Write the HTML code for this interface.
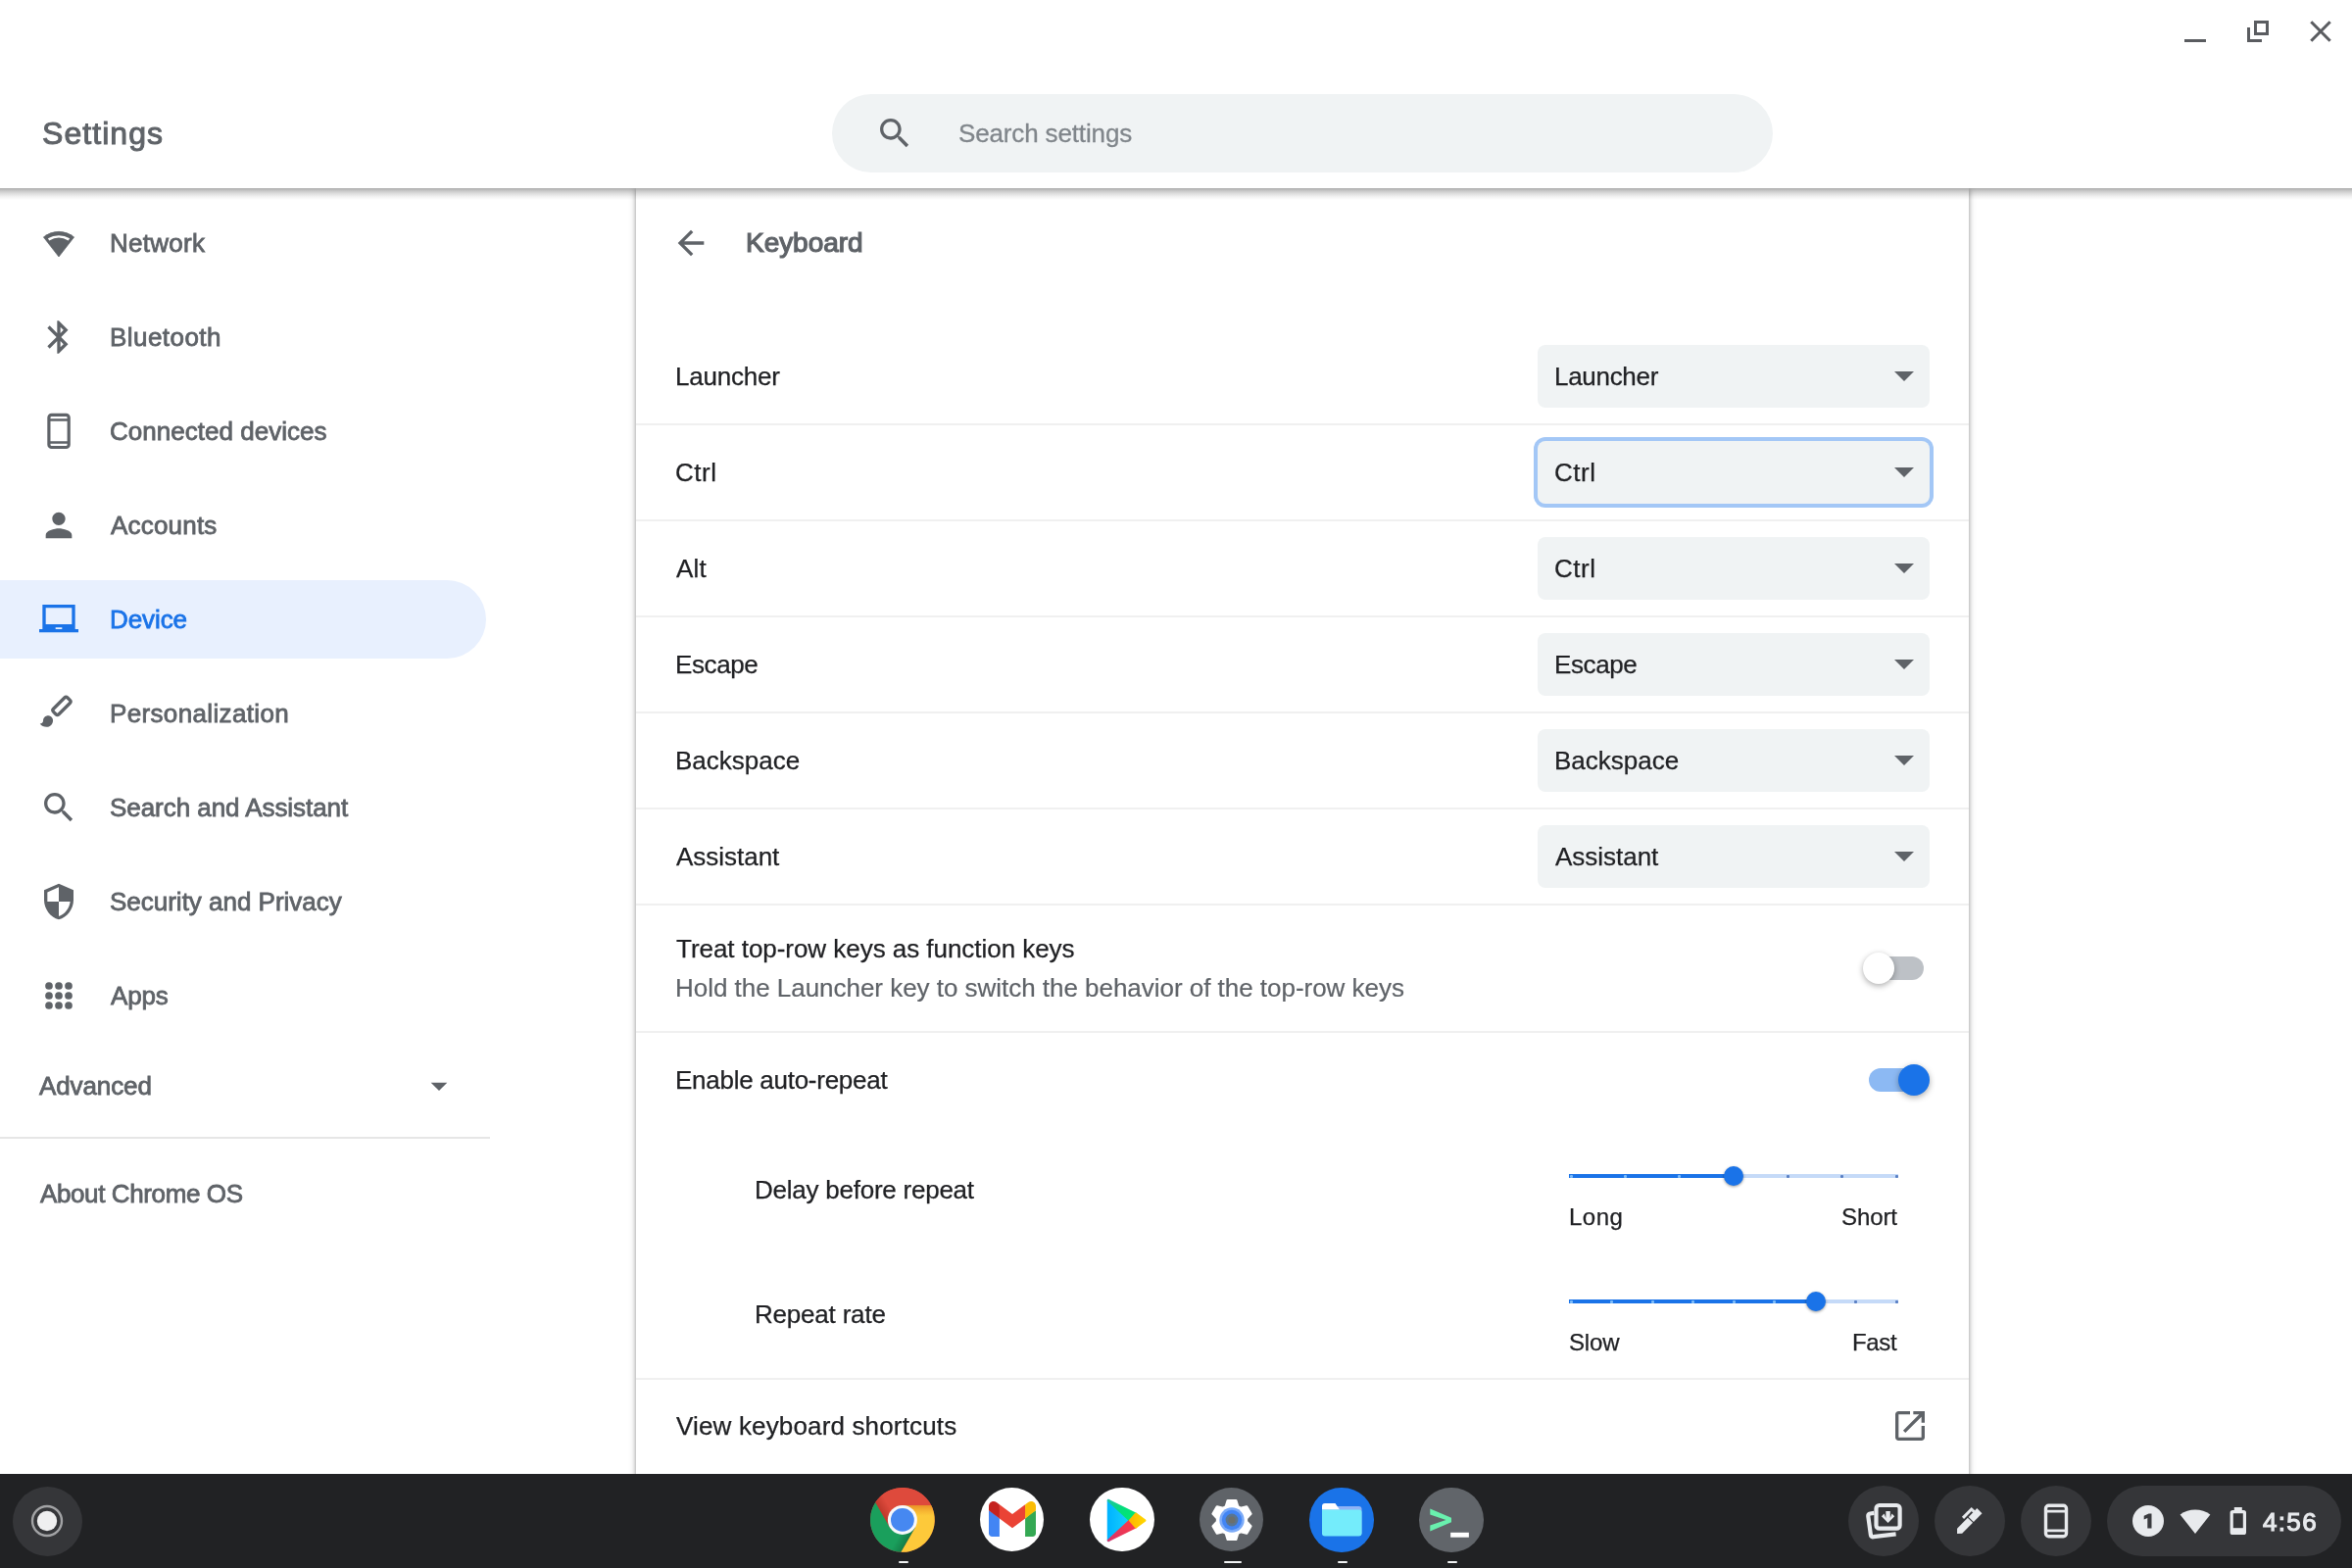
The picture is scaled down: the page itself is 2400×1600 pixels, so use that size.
<!DOCTYPE html>
<html><head><meta charset="utf-8"><title>Settings</title><style>
html,body{margin:0;padding:0}
body{width:2400px;height:1600px;overflow:hidden;background:#fff;position:relative;font-family:"Liberation Sans",sans-serif;}
.t{position:absolute;white-space:pre;line-height:60px;height:60px;will-change:transform;}
.i{position:absolute;display:block;overflow:visible}
.a{position:absolute}
.sep{position:absolute;left:649px;width:1360px;height:2px;background:#f0f0f0}
.sel{position:absolute;left:1569px;width:400px;height:64px;border-radius:8px;background:#f0f3f4}
</style></head>
<body>
<div class="a" style="left:649px;top:192px;width:1360px;height:1330px;background:#fff;box-shadow:0 2px 4px rgba(0,0,0,.28),0 2px 6px 2px rgba(0,0,0,.14)"></div>
<svg class="i" style="left:685px;top:228px" width="40" height="40" viewBox="0 0 24 24" fill="#5f6368" ><path d="M20 11H7.83l5.59-5.59L12 4l-8 8 8 8 1.41-1.41L7.83 13H20v-2z"/></svg>
<div class="sep" style="top:432px"></div>
<div class="sep" style="top:530px"></div>
<div class="sep" style="top:628px"></div>
<div class="sep" style="top:726px"></div>
<div class="sep" style="top:824px"></div>
<div class="sep" style="top:922px"></div>
<div class="sep" style="top:1052px"></div>
<div class="sep" style="top:1406px"></div>
<div class="sel" style="top:352px"></div>
<svg class="i" style="left:1933px;top:379px" width="20" height="10" viewBox="0 0 20 10"><path d="M0 0H20L10 10z" fill="#5f6368"/></svg>
<div class="sel" style="top:450px;box-shadow:0 0 0 4px #a3c7f6"></div>
<svg class="i" style="left:1933px;top:477px" width="20" height="10" viewBox="0 0 20 10"><path d="M0 0H20L10 10z" fill="#5f6368"/></svg>
<div class="sel" style="top:548px"></div>
<svg class="i" style="left:1933px;top:575px" width="20" height="10" viewBox="0 0 20 10"><path d="M0 0H20L10 10z" fill="#5f6368"/></svg>
<div class="sel" style="top:646px"></div>
<svg class="i" style="left:1933px;top:673px" width="20" height="10" viewBox="0 0 20 10"><path d="M0 0H20L10 10z" fill="#5f6368"/></svg>
<div class="sel" style="top:744px"></div>
<svg class="i" style="left:1933px;top:771px" width="20" height="10" viewBox="0 0 20 10"><path d="M0 0H20L10 10z" fill="#5f6368"/></svg>
<div class="sel" style="top:842px"></div>
<svg class="i" style="left:1933px;top:869px" width="20" height="10" viewBox="0 0 20 10"><path d="M0 0H20L10 10z" fill="#5f6368"/></svg>
<div class="a" style="left:1907px;top:976px;width:56px;height:24px;border-radius:12px;background:#bdc1c6"></div>
<div class="a" style="left:1901px;top:972px;width:32px;height:32px;border-radius:50%;background:#fff;box-shadow:0 2px 6px rgba(0,0,0,.33)"></div>
<div class="a" style="left:1907px;top:1090px;width:56px;height:24px;border-radius:12px;background:#8cb9f3"></div>
<div class="a" style="left:1937px;top:1086px;width:32px;height:32px;border-radius:50%;background:#1a73e8;box-shadow:0 2px 6px rgba(0,0,0,.33)"></div>
<div class="a" style="left:1601px;top:1198px;width:336px;height:4px;background:#c5daf8"></div>
<div class="a" style="left:1601px;top:1198px;width:168.0px;height:4px;background:#1a73e8"></div>
<div class="a" style="left:1601.5px;top:1198.5px;width:3px;height:3px;border-radius:1px;background:#7dbcfa"></div>
<div class="a" style="left:1656.8px;top:1198.5px;width:3px;height:3px;border-radius:1px;background:#7dbcfa"></div>
<div class="a" style="left:1712.2px;top:1198.5px;width:3px;height:3px;border-radius:1px;background:#7dbcfa"></div>
<div class="a" style="left:1822.8px;top:1198.5px;width:3px;height:3px;border-radius:1px;background:#5a80c4"></div>
<div class="a" style="left:1878.2px;top:1198.5px;width:3px;height:3px;border-radius:1px;background:#5a80c4"></div>
<div class="a" style="left:1933.5px;top:1198.5px;width:3px;height:3px;border-radius:1px;background:#5a80c4"></div>
<div class="a" style="left:1759.0px;top:1190px;width:20px;height:20px;border-radius:50%;background:#1a73e8;box-shadow:0 1px 3px rgba(0,0,0,.4)"></div>
<div class="a" style="left:1601px;top:1326px;width:336px;height:4px;background:#c5daf8"></div>
<div class="a" style="left:1601px;top:1326px;width:252.0px;height:4px;background:#1a73e8"></div>
<div class="a" style="left:1601.5px;top:1326.5px;width:3px;height:3px;border-radius:1px;background:#7dbcfa"></div>
<div class="a" style="left:1643.0px;top:1326.5px;width:3px;height:3px;border-radius:1px;background:#7dbcfa"></div>
<div class="a" style="left:1684.5px;top:1326.5px;width:3px;height:3px;border-radius:1px;background:#7dbcfa"></div>
<div class="a" style="left:1726.0px;top:1326.5px;width:3px;height:3px;border-radius:1px;background:#7dbcfa"></div>
<div class="a" style="left:1767.5px;top:1326.5px;width:3px;height:3px;border-radius:1px;background:#7dbcfa"></div>
<div class="a" style="left:1809.0px;top:1326.5px;width:3px;height:3px;border-radius:1px;background:#7dbcfa"></div>
<div class="a" style="left:1892.0px;top:1326.5px;width:3px;height:3px;border-radius:1px;background:#5a80c4"></div>
<div class="a" style="left:1933.5px;top:1326.5px;width:3px;height:3px;border-radius:1px;background:#5a80c4"></div>
<div class="a" style="left:1843.0px;top:1318px;width:20px;height:20px;border-radius:50%;background:#1a73e8;box-shadow:0 1px 3px rgba(0,0,0,.4)"></div>
<svg class="i" style="left:1929px;top:1435px" width="40" height="40" viewBox="0 0 24 24" fill="#5f6368" ><path d="M19 19H5V5h7V3H5c-1.11 0-2 .9-2 2v14c0 1.1.89 2 2 2h14c1.1 0 2-.9 2-2v-7h-2v7zM14 3v2h3.59l-9.83 9.83 1.41 1.41L19 6.41V10h2V3h-7z"/></svg>
<div class="a" style="left:0;top:592px;width:496px;height:80px;border-radius:0 40px 40px 0;background:#e8f0fe"></div>
<svg class="i" style="left:40px;top:228px" width="40" height="40" viewBox="0 0 40 40"><path d="M20 34 L4.4 13.9 A24.7 24.7 0 0 1 35.6 13.9 Z" fill="#5f6368" stroke="#5f6368" stroke-width="0.7" stroke-linejoin="round"/><path d="M9.6 16.4 A20 20 0 0 1 30.4 16.4" stroke="#fff" stroke-width="2.7" fill="none"/></svg>
<svg class="i" style="left:40px;top:324px" width="40" height="40" viewBox="0 0 24 24" fill="#5f6368" ><path d="M17.71 7.71L12 2h-1v7.59L6.41 5 5 6.41 10.59 12 5 17.59 6.41 19 11 14.41V22h1l5.71-5.71-4.3-4.29 4.3-4.29zM13 5.83l1.88 1.88L13 9.59V5.83zm1.88 10.46L13 18.17v-3.76l1.88 1.88z"/></svg>
<svg class="i" style="left:40px;top:420px" width="40" height="40" viewBox="0 0 40 40" fill="none" stroke="#5f6368"><rect x="9.9" y="3.3" width="20.3" height="33.2" rx="2.8" stroke-width="3.2"/><path d="M10 8.5H30 M10 31.5H30" stroke-width="2.3"/></svg>
<svg class="i" style="left:40px;top:516px" width="40" height="40" viewBox="0 0 24 24" fill="#5f6368" ><path d="M12 12c2.21 0 4-1.79 4-4s-1.79-4-4-4-4 1.79-4 4 1.79 4 4 4zm0 2c-2.67 0-8 1.34-8 4v2h16v-2c0-2.66-5.33-4-8-4z"/></svg>
<svg class="i" style="left:40px;top:612px" width="40" height="40" viewBox="0 0 24 24" fill="#1a73e8" ><path d="M22 18V3H2v15H0v2h24v-2h-2zm-8 0h-4v-1h4v1zm6-3H4V5h16v10z"/></svg>
<svg class="i" style="left:40px;top:708px" width="40" height="40" viewBox="0 0 40 40"><g transform="translate(22.95 12.4) rotate(-45)"><rect x="-10.15" y="-3.9" width="20.3" height="7.8" rx="2.2" fill="none" stroke="#5f6368" stroke-width="3.3"/></g><path transform="translate(-2.6 -1.2) scale(1.6667)" d="M7 14c-1.66 0-3 1.34-3 3 0 1.31-1.16 2-2 2 .92 1.22 2.49 2 4 2 2.21 0 4-1.79 4-4 0-1.66-1.34-3-3-3z" fill="#5f6368"/></svg>
<svg class="i" style="left:40px;top:804px" width="40" height="40" viewBox="0 0 24 24" fill="#5f6368" ><path d="M15.5 14h-.79l-.28-.27C15.41 12.59 16 11.11 16 9.5 16 5.91 13.09 3 9.5 3S3 5.91 3 9.5 5.91 16 9.5 16c1.61 0 3.09-.59 4.23-1.57l.27.28v.79l5 4.99L20.49 19l-4.99-5zm-6 0C7.01 14 5 11.99 5 9.5S7.01 5 9.5 5 14 7.01 14 9.5 11.99 14 9.5 14z"/></svg>
<svg class="i" style="left:40px;top:900px" width="40" height="40" viewBox="0 0 24 24" fill="#5f6368" ><path d="M12 1L3 5v6c0 5.55 3.84 10.74 9 12 5.16-1.26 9-6.45 9-12V5l-9-4zm0 10.99h7c-.53 4.12-3.28 7.79-7 8.94V12H5V6.3l7-3.11v8.8z"/></svg>
<svg class="i" style="left:40px;top:996px" width="40" height="40" viewBox="0 0 40 40" fill="#5f6368"><circle cx="10" cy="10" r="3.85"/><circle cx="10" cy="20" r="3.85"/><circle cx="10" cy="30" r="3.85"/><circle cx="20" cy="10" r="3.85"/><circle cx="20" cy="20" r="3.85"/><circle cx="20" cy="30" r="3.85"/><circle cx="30" cy="10" r="3.85"/><circle cx="30" cy="20" r="3.85"/><circle cx="30" cy="30" r="3.85"/></svg>
<svg class="i" style="left:428px;top:1088px" width="40" height="40" viewBox="0 0 24 24" fill="#5f6368" ><path d="M7 10l5 5 5-5z"/></svg>
<div class="a" style="left:0;top:1160px;width:500px;height:2px;background:#e6e6e6"></div>
<div class="a" style="left:0;top:0;width:2400px;height:192px;background:#fff"></div>
<div class="a" style="left:0;top:192px;width:2400px;height:12px;background:linear-gradient(to bottom,rgba(0,0,0,.32),rgba(0,0,0,.17) 35%,rgba(0,0,0,.06) 70%,rgba(0,0,0,0))"></div>
<div class="a" style="left:849px;top:96px;width:960px;height:80px;border-radius:40px;background:#f0f3f4"></div>
<svg class="i" style="left:893px;top:116px" width="40" height="40" viewBox="0 0 24 24" fill="#5f6368" ><path d="M15.5 14h-.79l-.28-.27C15.41 12.59 16 11.11 16 9.5 16 5.91 13.09 3 9.5 3S3 5.91 3 9.5 5.91 16 9.5 16c1.61 0 3.09-.59 4.23-1.57l.27.28v.79l5 4.99L20.49 19l-4.99-5zm-6 0C7.01 14 5 11.99 5 9.5S7.01 5 9.5 5 14 7.01 14 9.5 11.99 14 9.5 14z"/></svg>
<div class="a" style="left:2229px;top:40px;width:22px;height:3px;background:#5a5c60"></div>
<div class="a" style="left:2300px;top:21px;width:9px;height:9px;border:3px solid #5a5c60"></div>
<div class="a" style="left:2293px;top:28px;width:12px;height:12px;border-left:3px solid #5a5c60;border-bottom:3px solid #5a5c60"></div>
<svg class="i" style="left:2354px;top:18px" width="28" height="28" viewBox="0 0 28 28"><path d="M4.3 4.3 L23.7 23.7 M23.7 4.3 L4.3 23.7" stroke="#5a5c60" stroke-width="3" fill="none"/></svg>
<div class="a" style="left:0;top:1504px;width:2400px;height:96px;background:#212224"></div>
<div class="a" style="left:12.5px;top:1516.5px;width:71px;height:71px;border-radius:50%;background:#353639"></div>
<svg class="i" style="left:28px;top:1532px" width="40" height="40" viewBox="-20 -20 40 40"><circle r="15" fill="none" stroke="#a2a3a5" stroke-width="2.4"/><circle r="10.2" fill="#efeff0"/></svg>
<svg class="i" style="left:888.1px;top:1518.1px" width="65.8" height="65.8" viewBox="-32.9 -32.9 65.8 65.8"><defs><linearGradient id="cgy" x1="0" y1="0" x2="0" y2="1"><stop offset="0" stop-color="#d9601a" stop-opacity=".55"/><stop offset="1" stop-color="#e8881a" stop-opacity="0"/></linearGradient><linearGradient id="cgr" x1="0" y1="0" x2="0" y2="1"><stop offset="0" stop-color="#8c1d12" stop-opacity=".4"/><stop offset="1" stop-color="#8c1d12" stop-opacity="0"/></linearGradient><linearGradient id="cgg" x1="0" y1="0" x2="0" y2="1"><stop offset="0" stop-color="#0a4d2a" stop-opacity=".4"/><stop offset="1" stop-color="#0a4d2a" stop-opacity="0"/></linearGradient><clipPath id="ccp"><circle r="32.9"/></clipPath></defs><circle r="32.9" fill="#de4a3c"/><path d="M0.00 -15.00 L29.28 -15.00 A32.9 32.9 0 0 0 -27.63 -17.86 L-12.99 7.50 Z" fill="#de4a3c"/><path d="M12.99 7.50 L-1.65 32.86 A32.9 32.9 0 0 0 29.28 -15.00 L0.00 -15.00 Z" fill="#fdc93a"/><path d="M-12.99 7.50 L-27.63 -17.86 A32.9 32.9 0 0 0 -1.65 32.86 L12.99 7.50 Z" fill="#1a9f5c"/><g clip-path="url(#ccp)"><rect x="0" y="-15.0" width="32.9" height="11" fill="url(#cgy)"/><g transform="rotate(120)"><rect x="0" y="-15.0" width="32.9" height="10" fill="url(#cgg)"/></g><g transform="rotate(240)"><rect x="0" y="-15.0" width="32.9" height="10" fill="url(#cgr)"/></g></g><circle r="15.0" fill="#f8f9fa"/><circle r="11.9" fill="#4688f1"/></svg>
<div class="a" style="left:999.95px;top:1517.95px;width:65.5px;height:65.5px;border-radius:50%;background:#fff"></div><svg class="i" style="left:1008.7px;top:1532.4px" width="48" height="36.2" viewBox="0 0 256 193"><path d="M58.182 192.05V93.14L27.507 65.077 0 49.504v125.091c0 9.658 7.825 17.455 17.455 17.455h40.727z" fill="#4285F4"/><path d="M197.818 192.05h40.727c9.659 0 17.455-7.826 17.455-17.455V49.505l-31.156 17.837-27.026 25.798v98.91z" fill="#34A853"/><path d="M58.182 93.14l-4.174-38.647 4.174-36.989L128 69.868l69.818-52.364 4.669 34.992-4.669 40.644L128 145.504z" fill="#EA4335"/><path d="M197.818 17.504V93.14L256 49.504V26.231c0-21.585-24.64-33.89-41.89-20.945l-16.292 12.218z" fill="#FBBC04"/><path d="M0 49.504l26.759 20.07L58.182 93.14V17.504L41.89 5.286C24.61-7.66 0 4.646 0 26.23v23.273z" fill="#C5221F"/></svg>
<div class="a" style="left:1112.15px;top:1517.95px;width:65.5px;height:65.5px;border-radius:50%;background:#fff"></div><svg class="i" style="left:1127.9px;top:1527.7px" width="44" height="46" viewBox="0 0 44 46"><defs><linearGradient id="pb" x1="0" y1="0" x2="1" y2="0"><stop offset="0" stop-color="#00b4ff"/><stop offset="1" stop-color="#19d2fb"/></linearGradient><linearGradient id="pg" x1="0" y1="0" x2="1" y2="1"><stop offset="0" stop-color="#1ec4a0"/><stop offset=".45" stop-color="#04dd7c"/><stop offset="1" stop-color="#00ea72"/></linearGradient><linearGradient id="pr" x1="1" y1="0" x2="0" y2="1"><stop offset="0" stop-color="#ff3a44"/><stop offset="1" stop-color="#d93468"/></linearGradient><linearGradient id="py" x1="1" y1="0" x2="0" y2="0"><stop offset="0" stop-color="#ffd600"/><stop offset="1" stop-color="#ffb700"/></linearGradient></defs><g stroke-linejoin="round" stroke-width="2.5"><path d="M3 3 L25.2 23.5 L3 44 Z" fill="url(#pb)" stroke="url(#pb)"/><path d="M3 3 L31 16.8 L25.2 23.5 Z" fill="url(#pg)" stroke="url(#pg)"/><path d="M3 44 L31 30.2 L25.2 23.5 Z" fill="url(#pr)" stroke="url(#pr)"/><path d="M31 16.8 L40.2 23.5 L31 30.2 L25.2 23.5 Z" fill="url(#py)" stroke="url(#py)"/></g></svg>
<div class="a" style="left:1223.85px;top:1517.95px;width:65.5px;height:65.5px;border-radius:50%;background:#5f6368"></div><svg class="i" style="left:1232.6px;top:1526.7px" width="48" height="48" viewBox="-24 -24 48 48"><polygon points="-4.22,-19.86 4.22,-19.86 6.10,-13.70 8.82,-12.14 15.09,-13.58 19.31,-6.27 14.92,-1.57 14.92,1.57 19.31,6.27 15.09,13.58 8.82,12.14 6.10,13.70 4.22,19.86 -4.22,19.86 -6.10,13.70 -8.82,12.14 -15.09,13.58 -19.31,6.27 -14.92,1.57 -14.92,-1.57 -19.31,-6.27 -15.09,-13.58 -8.82,-12.14 -6.10,-13.70" fill="#fff" stroke="#fff" stroke-width="2.5" stroke-linejoin="round"/><circle r="12.7" fill="#7baaf7"/><circle r="10.2" fill="#4285f4"/><circle r="6.4" fill="#5a7590"/><circle r="3.6" fill="#6b6f6c"/></svg>
<div class="a" style="left:1336.05px;top:1518.05px;width:65.5px;height:65.5px;border-radius:50%;background:#1a73e8"></div><svg class="i" style="left:1348.6px;top:1533.7px" width="41" height="34" viewBox="0 0 41 34"><rect x="0" y="3" width="40.5" height="30" rx="3" fill="#8fb3f6"/><path d="M0 3 A3 3 0 0 1 3 0 H13.5 L18 6.5 H0Z" fill="#fff"/><path d="M0 6.5 H38 A2.5 2.5 0 0 1 40.5 9 V30.5 A3 3 0 0 1 37.5 33.5 H3 A3 3 0 0 1 0 30.5 Z" fill="#74ecfb"/><path d="M0 6.5 H18 L13.5 0" fill="none"/></svg>
<div class="a" style="left:1448.25px;top:1518.15px;width:65.5px;height:65.5px;border-radius:50%;background:#61656a"></div><svg class="i" style="left:1451.0px;top:1520.9px" width="60" height="60" viewBox="-30 -30 60 60"><path d="M-21.7 -11.6 L0 -2.3 V2.3 L-21.7 11.6 V5.4 L-5.5 0 L-21.7 -5.4 Z" fill="#69f0ae"/><rect x="-0.85" y="12.8" width="18.7" height="4.9" fill="#fff"/></svg>
<div class="a" style="left:916.5px;top:1592.5px;width:10px;height:2.5px;border-radius:1px;background:#f1f3f4"></div>
<div class="a" style="left:1249.0px;top:1592.5px;width:18px;height:2.5px;border-radius:1px;background:#f1f3f4"></div>
<div class="a" style="left:1365.0px;top:1592.5px;width:10px;height:2.5px;border-radius:1px;background:#f1f3f4"></div>
<div class="a" style="left:1476.5px;top:1592.5px;width:10px;height:2.5px;border-radius:1px;background:#f1f3f4"></div>
<div class="a" style="left:1886px;top:1516px;width:72px;height:72px;border-radius:50%;background:#353639"></div>
<div class="a" style="left:1974px;top:1516px;width:72px;height:72px;border-radius:50%;background:#353639"></div>
<div class="a" style="left:2062px;top:1516px;width:72px;height:72px;border-radius:50%;background:#353639"></div>
<div class="a" style="left:2150px;top:1516px;width:239px;height:72px;border-radius:36px;background:#353639"></div>
<svg class="i" style="left:1902px;top:1532px" width="40" height="40" viewBox="0 0 40 40" fill="none" stroke="#e8eaed" stroke-width="4.2" stroke-linejoin="round" stroke-linecap="butt"><rect x="12.5" y="4" width="24.1" height="23.7" rx="3.2"/><path d="M10.4 11.9 L6.4 12.5 Q4 12.9 4.3 15.3 L6.9 34.2 Q7.3 36.6 9.7 36.2 L32.6 33.3"/><path d="M22.35 10.1 H26.75 V17 L28.5 12.5 L31.2 15.2 L24.55 22 L17.9 15.2 L20.6 12.5 L22.35 17 Z" fill="#e8eaed" stroke="none"/><path d="M24.55 21 L20 16.4 M24.55 21 L29.1 16.4" stroke-width="0" /></svg>
<svg class="i" style="left:1990px;top:1532px" width="40" height="40" viewBox="0 0 40 40" fill="#e8eaed"><g transform="translate(7.1 32.9) rotate(-45.6)"><path d="M0 0 L3.6 -3.6 H19.1 V3.6 H3.6 Z"/><rect x="20.3" y="-3.6" width="12.3" height="7.2"/><rect x="15.6" y="-8.5" width="13.9" height="3"/><rect x="26.6" y="-5.7" width="2.9" height="2.4"/></g></svg>
<svg class="i" style="left:2078px;top:1532px" width="40" height="40" viewBox="0 0 40 40" fill="none" stroke="#e8eaed"><rect x="9.5" y="4.2" width="21" height="31.6" rx="3" stroke-width="3.4"/><path d="M9.5 10.2H30.5 M9.5 29.8H30.5" stroke-width="2.8"/></svg>
<div class="a" style="left:2176px;top:1536px;width:32px;height:32px;border-radius:50%;background:#e8eaed"></div>
<svg class="i" style="left:2181.8px;top:1541.8px" width="20" height="20" viewBox="-10 -10 20 20"><path d="M3.5 -7.4 V7.6 H-0.7 V-2.9 L-4.3 -1.6 V-5.2 L0.6 -7.4 Z" fill="#3a3b3f"/></svg>
<svg class="i" style="left:2220px;top:1532px" width="40" height="40" viewBox="0 0 40 40"><path d="M20 33 L4.6 13.6 A26 26 0 0 1 35.4 13.6 Z" fill="#e8eaed"/></svg>
<svg class="i" style="left:2264px;top:1532px" width="40" height="40" viewBox="0 0 40 40"><rect x="13.2" y="10.6" width="13.2" height="21.8" rx="1" fill="none" stroke="#e8eaed" stroke-width="3.2"/><rect x="15.8" y="6" width="8" height="4" fill="#e8eaed"/><rect x="13.2" y="27.2" width="13.2" height="6.6" fill="#e8eaed"/></svg>
<div class="t" style="left:43.4px;top:105.6px;font-size:32px;letter-spacing:1.057px;color:#5f6368;-webkit-text-stroke:1.0px #5f6368;">Settings</div>
<div class="t" style="left:977.7px;top:105.6px;font-size:26px;letter-spacing:-0.143px;color:#80868b;-webkit-text-stroke:0.3px #80868b;">Search settings</div>
<div class="t" style="left:111.7px;top:218.0px;font-size:26px;letter-spacing:0.283px;color:#5f6368;-webkit-text-stroke:0.8px #5f6368;">Network</div>
<div class="t" style="left:111.7px;top:314.0px;font-size:26px;letter-spacing:0.45px;color:#5f6368;-webkit-text-stroke:0.8px #5f6368;">Bluetooth</div>
<div class="t" style="left:112.0px;top:410.0px;font-size:26px;letter-spacing:0.019px;color:#5f6368;-webkit-text-stroke:0.8px #5f6368;">Connected devices</div>
<div class="t" style="left:112.8px;top:506.0px;font-size:26px;letter-spacing:0.2px;color:#5f6368;-webkit-text-stroke:0.8px #5f6368;">Accounts</div>
<div class="t" style="left:111.7px;top:602.0px;font-size:26px;letter-spacing:-0.08px;color:#1a73e8;-webkit-text-stroke:0.8px #1a73e8;">Device</div>
<div class="t" style="left:111.7px;top:698.0px;font-size:26px;letter-spacing:0.35px;color:#5f6368;-webkit-text-stroke:0.8px #5f6368;">Personalization</div>
<div class="t" style="left:112.0px;top:794.0px;font-size:26px;letter-spacing:-0.053px;color:#5f6368;-webkit-text-stroke:0.8px #5f6368;">Search and Assistant</div>
<div class="t" style="left:112.0px;top:890.0px;font-size:26px;letter-spacing:-0.011px;color:#5f6368;-webkit-text-stroke:0.8px #5f6368;">Security and Privacy</div>
<div class="t" style="left:113.0px;top:986.0px;font-size:26px;letter-spacing:-0.2px;color:#5f6368;-webkit-text-stroke:0.8px #5f6368;">Apps</div>
<div class="t" style="left:40.3px;top:1077.7px;font-size:26px;letter-spacing:-0.1px;color:#5f6368;-webkit-text-stroke:0.8px #5f6368;">Advanced</div>
<div class="t" style="left:40.5px;top:1187.9px;font-size:26px;letter-spacing:-0.386px;color:#5f6368;-webkit-text-stroke:0.8px #5f6368;">About Chrome OS</div>
<div class="t" style="left:760.9px;top:217.5px;font-size:28px;letter-spacing:-0.043px;color:#5f6368;-webkit-text-stroke:1.2px #5f6368;">Keyboard</div>
<div class="t" style="left:688.9px;top:353.6px;font-size:26px;letter-spacing:-0.229px;color:#202124;-webkit-text-stroke:0.25px #202124;">Launcher</div>
<div class="t" style="left:689.3px;top:451.6px;font-size:26px;letter-spacing:0.5px;color:#202124;-webkit-text-stroke:0.25px #202124;">Ctrl</div>
<div class="t" style="left:690.0px;top:549.6px;font-size:26px;letter-spacing:0.2px;color:#202124;-webkit-text-stroke:0.25px #202124;">Alt</div>
<div class="t" style="left:689.1px;top:647.6px;font-size:26px;letter-spacing:-0.38px;color:#202124;-webkit-text-stroke:0.25px #202124;">Escape</div>
<div class="t" style="left:689.1px;top:745.6px;font-size:26px;letter-spacing:0.013px;color:#202124;-webkit-text-stroke:0.25px #202124;">Backspace</div>
<div class="t" style="left:690.0px;top:843.6px;font-size:26px;letter-spacing:-0.025px;color:#202124;-webkit-text-stroke:0.25px #202124;">Assistant</div>
<div class="t" style="left:690.3px;top:937.6px;font-size:26px;letter-spacing:-0.041px;color:#202124;-webkit-text-stroke:0.25px #202124;">Treat top-row keys as function keys</div>
<div class="t" style="left:689.3px;top:977.9px;font-size:26px;letter-spacing:-0.029px;color:#5f6368;-webkit-text-stroke:0.2px #5f6368;">Hold the Launcher key to switch the behavior of the top-row keys</div>
<div class="t" style="left:689.3px;top:1071.5px;font-size:26px;letter-spacing:-0.265px;color:#202124;-webkit-text-stroke:0.25px #202124;">Enable auto-repeat</div>
<div class="t" style="left:769.5px;top:1183.5px;font-size:26px;letter-spacing:-0.239px;color:#202124;-webkit-text-stroke:0.25px #202124;">Delay before repeat</div>
<div class="t" style="left:769.5px;top:1311.1px;font-size:26px;letter-spacing:-0.2px;color:#202124;-webkit-text-stroke:0.25px #202124;">Repeat rate</div>
<div class="t" style="left:690.3px;top:1424.7px;font-size:26px;letter-spacing:0.155px;color:#202124;-webkit-text-stroke:0.25px #202124;">View keyboard shortcuts</div>
<div class="t" style="left:1585.6px;top:353.6px;font-size:26px;letter-spacing:-0.3px;color:#202124;-webkit-text-stroke:0.25px #202124;">Launcher</div>
<div class="t" style="left:1586.0px;top:451.6px;font-size:26px;letter-spacing:0.5px;color:#202124;-webkit-text-stroke:0.25px #202124;">Ctrl</div>
<div class="t" style="left:1586.0px;top:549.6px;font-size:26px;letter-spacing:0.5px;color:#202124;-webkit-text-stroke:0.25px #202124;">Ctrl</div>
<div class="t" style="left:1585.8px;top:647.6px;font-size:26px;letter-spacing:-0.38px;color:#202124;-webkit-text-stroke:0.25px #202124;">Escape</div>
<div class="t" style="left:1585.8px;top:745.6px;font-size:26px;letter-spacing:0.013px;color:#202124;-webkit-text-stroke:0.25px #202124;">Backspace</div>
<div class="t" style="left:1586.7px;top:843.6px;font-size:26px;letter-spacing:-0.025px;color:#202124;-webkit-text-stroke:0.25px #202124;">Assistant</div>
<div class="t" style="left:1600.8px;top:1211.6px;font-size:24px;letter-spacing:0.467px;color:#202124;-webkit-text-stroke:0.25px #202124;">Long</div>
<div class="t" style="left:1878.6px;top:1211.6px;font-size:24px;letter-spacing:-0.1px;color:#202124;-webkit-text-stroke:0.25px #202124;">Short</div>
<div class="t" style="left:1601.0px;top:1339.8px;font-size:24px;letter-spacing:-0.133px;color:#202124;-webkit-text-stroke:0.25px #202124;">Slow</div>
<div class="t" style="left:1890.3px;top:1339.8px;font-size:24px;letter-spacing:-0.367px;color:#202124;-webkit-text-stroke:0.25px #202124;">Fast</div>
<div class="t" style="left:2308.8px;top:1522.6px;font-size:26px;letter-spacing:1.333px;color:#e8eaed;-webkit-text-stroke:1.1px #e8eaed;">4:56</div>
</body></html>
